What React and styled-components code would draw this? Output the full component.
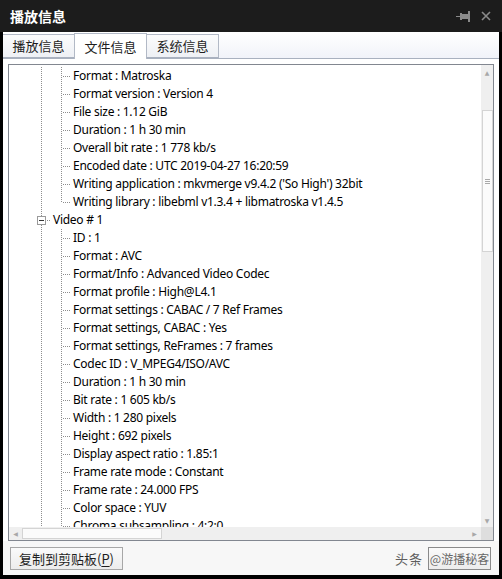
import React from "react";
import styled, { createGlobalStyle } from "styled-components";

const GlobalStyle = createGlobalStyle`
  html, body {
    margin: 0;
    padding: 0;
    background: #000;
  }
`;

const CJK = `"Microsoft YaHei", "Noto Sans CJK SC", sans-serif`;
const UI = `"Segoe UI", "Noto Sans", "Noto Sans CJK SC", sans-serif`;

// dotted tree connector (1px on, 1px off)
const dots = (dir) =>
  `repeating-linear-gradient(${dir}, #8e8e8e 0 1px, transparent 1px 2px)`;

const generalInfo = [
  "Format : Matroska",
  "Format version : Version 4",
  "File size : 1.12 GiB",
  "Duration : 1 h 30 min",
  "Overall bit rate : 1 778 kb/s",
  "Encoded date : UTC 2019-04-27 16:20:59",
  "Writing application : mkvmerge v9.4.2 ('So High') 32bit",
  "Writing library : libebml v1.3.4 + libmatroska v1.4.5",
];

const videoInfo = [
  "ID : 1",
  "Format : AVC",
  "Format/Info : Advanced Video Codec",
  "Format profile : High@L4.1",
  "Format settings : CABAC / 7 Ref Frames",
  "Format settings, CABAC : Yes",
  "Format settings, ReFrames : 7 frames",
  "Codec ID : V_MPEG4/ISO/AVC",
  "Duration : 1 h 30 min",
  "Bit rate : 1 605 kb/s",
  "Width : 1 280 pixels",
  "Height : 692 pixels",
  "Display aspect ratio : 1.85:1",
  "Frame rate mode : Constant",
  "Frame rate : 24.000 FPS",
  "Color space : YUV",
  "Chroma subsampling : 4:2:0",
  "Bit depth : 8 bits",
];

const tabs = ["播放信息", "文件信息", "系统信息"];

export default function App() {
  const scroll = { vTop: 31, vSize: 142, hLeft: 0, hSize: 140 };

  return (
    <>
      <GlobalStyle />
      <Window>
        <TitleBar>
          <Title>播放信息</Title>
          <TitleTools>
            <svg width="15" height="11" viewBox="0 0 15 11">
              <rect x="0" y="5" width="5" height="1" fill="#8a8a8a" />
              <rect x="4" y="2" width="2" height="7" fill="#8a8a8a" />
              <rect x="6" y="3" width="6" height="5" fill="#8a8a8a" />
              <rect x="12" y="0" width="2" height="11" fill="#8a8a8a" />
            </svg>
            <svg width="10" height="10" viewBox="0 0 10 10">
              <path
                d="M1 1 L9 9 M9 1 L1 9"
                stroke="#8a8a8a"
                strokeWidth="1.6"
                fill="none"
              />
            </svg>
          </TitleTools>
        </TitleBar>

        <Body>
          <TabStrip>
            {tabs.map((t, i) => (
              <Tab key={t} $active={i === 1} $first={i === 0}>
                {t}
              </Tab>
            ))}
          </TabStrip>

          <Content>
            <Panel>
              <TreeList>
                {generalInfo.map((t, i) => (
                  <Row key={"g" + i}>
                    <Guide $line="full" />
                    <Guide
                      $line={i === generalInfo.length - 1 ? "top" : "full"}
                      $elbow
                    />
                    <Label>{t}</Label>
                  </Row>
                ))}
                <Row>
                  <Guide $line="full" $elbow>
                    <Expander />
                  </Guide>
                  <Label>Video # 1</Label>
                </Row>
                {videoInfo.map((t, i) => (
                  <Row key={"v" + i}>
                    <Guide $line="full" />
                    <Guide $line="full" $elbow />
                    <Label>{t}</Label>
                  </Row>
                ))}
              </TreeList>

              <VScroll>
                <ArrowBtn>▲</ArrowBtn>
                <Track>
                  <VThumb style={{ top: scroll.vTop, height: scroll.vSize }}>
                    <Grip />
                  </VThumb>
                </Track>
                <ArrowBtn>▼</ArrowBtn>
              </VScroll>

              <HScroll>
                <ArrowBtn $wide>◀</ArrowBtn>
                <Track>
                  <HThumb style={{ left: scroll.hLeft, width: scroll.hSize }} />
                </Track>
                <ArrowBtn $wide>▶</ArrowBtn>
              </HScroll>
              <Corner />
            </Panel>
          </Content>

          <Footer>
            <Button>
              复制到剪贴板(<u>P</u>)
            </Button>
            <Mark>
              <MarkText>头条</MarkText>
              <MarkBox>@游播秘客</MarkBox>
            </Mark>
          </Footer>
        </Body>
      </Window>
    </>
  );
}

const Window = styled.div`
  width: 502px;
  height: 579px;
  box-sizing: border-box;
  padding: 0 3px 4px 3px;
  background: #000;
  display: flex;
  flex-direction: column;
`;

const TitleBar = styled.div`
  height: 32px;
  flex: none;
  background: #1c1c1c;
  margin: 0 -3px;
  padding: 0 11px 0 10px;
  display: flex;
  align-items: center;
  justify-content: space-between;
`;

const Title = styled.div`
  color: #fff;
  font-family: ${CJK};
  font-weight: bold;
  font-size: 14px;
`;

const TitleTools = styled.div`
  display: flex;
  align-items: center;
  gap: 10px;
`;

const Body = styled.div`
  flex: 1;
  display: flex;
  flex-direction: column;
  background: #fff;
  min-height: 0;
`;

const TabStrip = styled.div`
  height: 26px;
  flex: none;
  display: flex;
  align-items: flex-end;
  background: linear-gradient(#ffffff, #f1f3f9);
  border-bottom: 1px solid #a9b1bf;
`;

const Tab = styled.div`
  box-sizing: border-box;
  width: ${(p) => (p.$first ? "72px" : "73px")};
  height: ${(p) => (p.$active ? "26px" : "24px")};
  margin-bottom: ${(p) => (p.$active ? "-1px" : "0")};
  padding-top: ${(p) => (p.$active ? "3px" : "1px")};
  text-align: center;
  font-family: ${CJK};
  font-size: 13px;
  color: #1e1e1e;
  background: ${(p) =>
    p.$active ? "#fff" : "linear-gradient(#fbfbfc, #eef0f5)"};
  border: 1px solid #b2b9c6;
  border-left: ${(p) => (p.$first ? "none" : "1px solid #b2b9c6")};
  border-bottom: ${(p) => (p.$active ? "none" : "1px solid #a9b1bf")};
  & + & {
    margin-left: -1px;
  }
`;

const Content = styled.div`
  flex: 1;
  min-height: 0;
  display: flex;
  padding: 5px 5px 0 5px;
  background: #fff;
`;

const Panel = styled.div`
  flex: 1;
  border: 1px solid #828790;
  display: grid;
  grid-template-columns: 1fr 12px;
  grid-template-rows: 1fr 13px;
  overflow: hidden;
  background: #fff;
`;

const TreeList = styled.div`
  overflow: hidden;
  padding-top: 2px;
  min-height: 0;
`;

const Row = styled.div`
  display: flex;
  height: 18px;
  padding-left: 22px;
`;

const Guide = styled.span`
  position: relative;
  flex: none;
  width: 20px;
  height: 100%;

  &::before {
    content: "";
    display: ${(p) => (p.$line === "none" ? "none" : "block")};
    position: absolute;
    left: 10px;
    top: 0;
    width: 1px;
    height: ${(p) => (p.$line === "top" ? "10px" : "100%")};
    background: ${dots("to bottom")};
  }

  &::after {
    content: "";
    display: ${(p) => (p.$elbow ? "block" : "none")};
    position: absolute;
    left: 12px;
    top: 9px;
    width: 8px;
    height: 1px;
    background: ${dots("to right")};
  }
`;

const Expander = styled.span`
  position: absolute;
  z-index: 1;
  left: 6px;
  top: 5px;
  width: 9px;
  height: 9px;
  box-sizing: border-box;
  border: 1px solid #9a9a9a;
  background: #fff;

  &::after {
    content: "";
    position: absolute;
    left: 1px;
    top: 3px;
    width: 5px;
    height: 1px;
    background: #333;
  }
`;

const Label = styled.span`
  margin-left: 2px;
  line-height: 18px;
  white-space: nowrap;
  font-family: ${UI};
  font-size: 12px;
  letter-spacing: -0.27px;
  color: #000;
`;

const VScroll = styled.div`
  display: flex;
  flex-direction: column;
  background: #efefef;
`;

const HScroll = styled.div`
  display: flex;
  background: #efefef;
`;

const ArrowBtn = styled.div`
  flex: none;
  width: ${(p) => (p.$wide ? "13px" : "12px")};
  height: ${(p) => (p.$wide ? "13px" : "14px")};
  display: flex;
  align-items: center;
  justify-content: center;
  font-size: 6px;
  color: #a8a8a8;
  font-family: "DejaVu Sans", sans-serif;
`;

const Track = styled.div`
  position: relative;
  flex: 1;
`;

const VThumb = styled.div`
  position: absolute;
  left: 1px;
  right: 0;
  box-sizing: border-box;
  border: 1px solid #d4d4d4;
  background: #fbfbfb;
  display: flex;
  align-items: center;
  justify-content: center;
`;

const Grip = styled.span`
  width: 5px;
  height: 5px;
  background: repeating-linear-gradient(#a9a9a9 0 1px, transparent 1px 2px);
`;

const HThumb = styled.div`
  position: absolute;
  top: 1px;
  bottom: 1px;
  box-sizing: border-box;
  border: 1px solid #d4d4d4;
  background: #fbfbfb;
`;

const Corner = styled.div`
  background: #dedede;
`;

const Footer = styled.div`
  height: 34px;
  flex: none;
  display: flex;
  align-items: center;
  justify-content: space-between;
  padding: 1px 8px 0 7px;
  box-sizing: border-box;
  background: #f7f7f7;
`;

const Button = styled.div`
  box-sizing: border-box;
  width: 113px;
  height: 23px;
  border: 1px solid #a7a7a7;
  background: linear-gradient(#fafafa, #ececec);
  display: flex;
  align-items: center;
  justify-content: center;
  font-family: ${CJK};
  font-size: 13px;
  color: #1e1e1e;

  u {
    text-underline-offset: 2px;
  }
`;

const Mark = styled.div`
  display: flex;
  align-items: center;
  gap: 5px;
  font-family: ${CJK};
  font-size: 13px;
  color: #5e5e5e;
`;

const MarkText = styled.span`
  letter-spacing: 1px;
`;

const MarkBox = styled.div`
  box-sizing: border-box;
  width: 63px;
  height: 23px;
  border: 1px solid #8a8a8a;
  background: linear-gradient(#fafafa, #ececec);
  display: flex;
  align-items: center;
  justify-content: center;
  white-space: nowrap;
  font-size: 12px;
  color: #666;
  text-shadow: 0 0 1px #fff;
`;
